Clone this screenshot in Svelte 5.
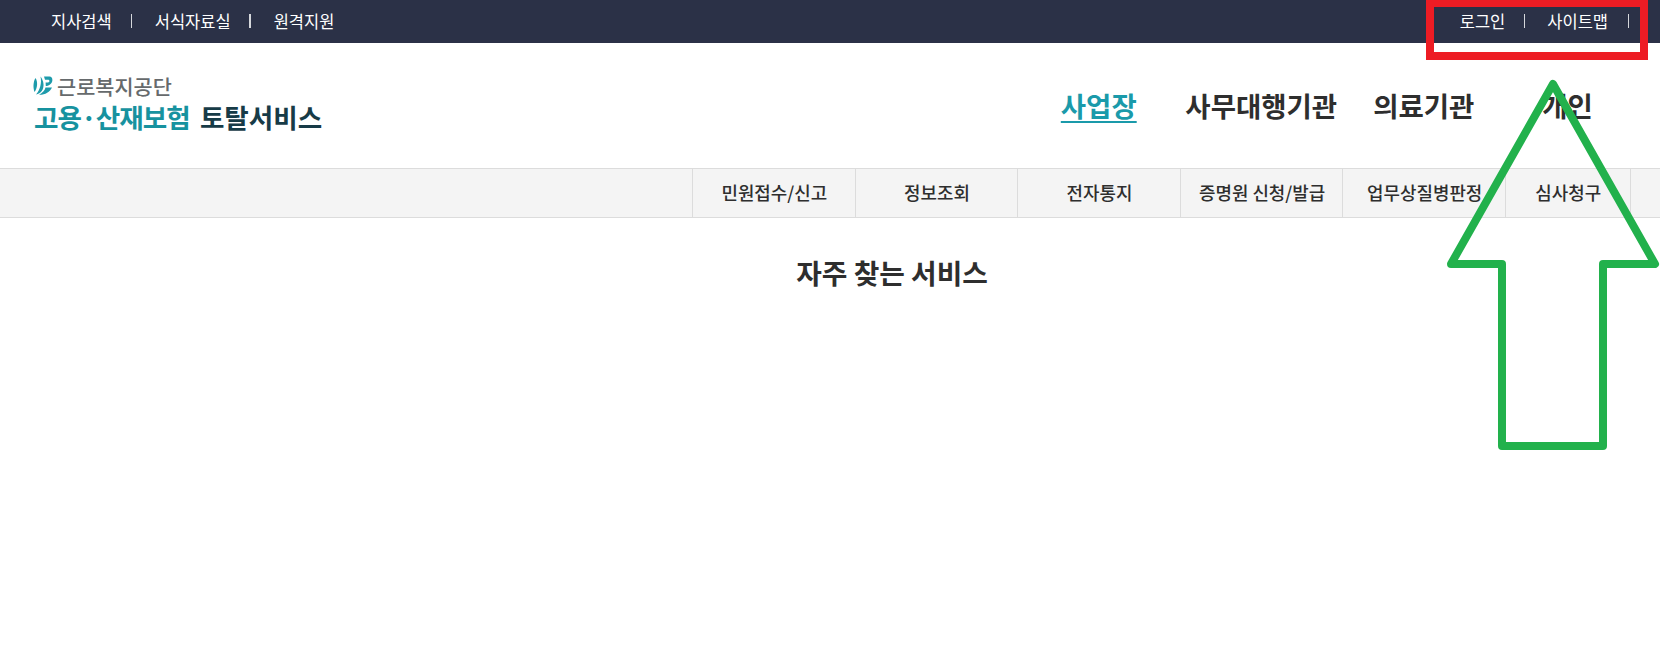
<script lang="ts">
	const utilLeft = ['지사검색', '서식자료실', '원격지원'];
	const utilRight = ['로그인', '사이트맵'];
	const mainNav = [
		{ label: '사업장', active: true },
		{ label: '사무대행기관', active: false },
		{ label: '의료기관', active: false },
		{ label: '개인', active: false }
	];
	const subNav = ['민원접수/신고', '정보조회', '전자통지', '증명원 신청/발급', '업무상질병판정', '심사청구'];
</script>

<div class="page">
	<div class="topbar">
		<ul class="util util-left">
			{#each utilLeft as item}
				<li>{item}</li>
			{/each}
		</ul>
		<ul class="util util-right">
			{#each utilRight as item}
				<li>{item}</li>
			{/each}
		</ul>
	</div>

	<header class="header">
		<div class="logo">
			<div class="logo-top">
				<svg class="logo-mark" width="20" height="20" viewBox="0 0 20 20" aria-hidden="true">
					<path d="M2.5 2 C0 6 0 12 1.5 16 C4.5 12 5 6 2.5 2 Z" fill="#1d9bab" />
					<path d="M7.5 0.5 C9 7 7 14 3 18.5 C8 18 11 13 10.5 8 C10.3 5 9 2.5 7.5 0.5 Z" fill="#1d9bab" />
					<path d="M11 0.5 H16.5 C20 0.5 20.5 6 17 8.5 C15.5 9.5 14 10 12.8 10 L12.6 6.5 H15 C16.8 6.5 17 3.8 15 3.8 H12 Z" fill="#1d9bab" />
					<path d="M12.5 11.5 H19 C17 16 12 19 6 18.8 C9.5 17 11.8 14.5 12.5 11.5 Z" fill="#1d9bab" />
				</svg>
				<span class="logo-org">근로복지공단</span>
			</div>
			<div class="logo-name"><span class="teal">고용·산재보험</span><span class="navy">토탈서비스</span></div>
		</div>
		<nav class="main-nav">
			{#each mainNav as item}
				<div class="main-cell">
					<a href="#top" class:active={item.active}>{item.label}</a>
				</div>
			{/each}
		</nav>
	</header>

	<div class="subnav">
		{#each subNav as item}
			<div class="subnav-item">{item}</div>
		{/each}
	</div>

	<h2 class="title">자주 찾는 서비스</h2>

	<svg class="marks" width="1660" height="645" viewBox="0 0 1660 645" aria-hidden="true">
		<rect x="1430" y="3" width="214" height="53" fill="none" stroke="#ed1c24" stroke-width="8" />
		<path
			d="M1553 84 L1655 264 L1603 264 L1603 446 L1502 446 L1502 264 L1451 264 Z"
			fill="none"
			stroke="#22b14c"
			stroke-width="8"
			stroke-linejoin="round"
		/>
	</svg>
</div>

<style>
	:global(body) {
		margin: 0;
		background: #fff;
	}

	.page {
		position: relative;
		width: 1660px;
		height: 645px;
		overflow: hidden;
		font-family: 'Noto Sans CJK KR', 'Noto Sans', sans-serif;
		color: #2e2e2e;
	}

	.topbar {
		display: flex;
		justify-content: space-between;
		box-sizing: border-box;
		height: 43px;
		background: #2b3147;
		padding: 0 31px 2px 51px;
	}

	.util {
		display: flex;
		align-items: center;
		margin: 0;
		padding: 0;
		list-style: none;
		color: #fff;
		font-size: 16.5px;
	}

	.util li {
		display: flex;
		align-items: center;
		white-space: nowrap;
	}

	.util li + li::before {
		content: '';
		width: 1px;
		height: 14px;
		margin: 0 23px 0 19px;
		background: #d5d7dc;
	}

	.util-left li:last-child::before {
		width: 2px;
		margin: 0 23px 0 18px;
	}

	.util-right li:last-child::before {
		margin: 0 22px 0 19px;
	}

	.util-right li:last-child::after {
		content: '';
		width: 1px;
		height: 14px;
		margin-left: 20px;
		background: #d5d7dc;
	}

	.header {
		display: flex;
		justify-content: space-between;
		align-items: center;
		height: 125px;
		padding: 0 30px 0 33px;
	}

	.logo {
		display: flex;
		flex-direction: column;
		gap: 1px;
		margin-top: -2px;
	}

	.logo-top {
		display: flex;
		align-items: center;
		gap: 4px;
	}

	.logo-org {
		font-size: 20.8px;
		line-height: 24px;
		color: #666a6c;
		font-weight: 500;
	}

	.logo-name {
		display: flex;
		gap: 10px;
		font-size: 26.6px;
		line-height: 36px;
		font-weight: 700;
		white-space: nowrap;
		margin-left: 1px;
	}

	.teal {
		color: #17929f;
		letter-spacing: -0.95px;
	}

	.navy {
		color: #173b47;
	}

	.main-nav {
		display: grid;
		grid-template-columns: 162.5px 162.5px 162.5px 125px;
		margin-bottom: 2px;
		font-size: 27.5px;
		font-weight: 700;
	}

	.main-cell {
		text-align: center;
	}

	.main-nav a {
		color: #2e2e2e;
		text-decoration: none;
		line-height: 36px;
	}

	.main-nav a.active {
		color: #1a9aaa;
		text-decoration: underline;
		text-underline-offset: 4px;
	}

	.subnav {
		display: flex;
		justify-content: flex-end;
		height: 48px;
		padding-right: 29.5px;
		background: #f4f4f4;
		border-top: 1px solid #dcdcdc;
		border-bottom: 1px solid #dcdcdc;
	}

	.subnav-item {
		display: flex;
		align-items: center;
		justify-content: center;
		width: 162.6px;
		box-sizing: border-box;
		border-left: 1px solid #dcdcdc;
		padding: 0 0 2px 1px;
		font-size: 17.9px;
		font-weight: 500;
		white-space: nowrap;
	}

	.subnav-item:last-child {
		width: 125.5px;
		border-right: 1px solid #dcdcdc;
	}

	.title {
		margin: 35px 0 0;
		padding-left: 124px;
		text-align: center;
		font-size: 27.8px;
		line-height: 38px;
		font-weight: 700;
	}

	.marks {
		position: absolute;
		top: 0;
		left: 0;
		pointer-events: none;
	}
</style>
